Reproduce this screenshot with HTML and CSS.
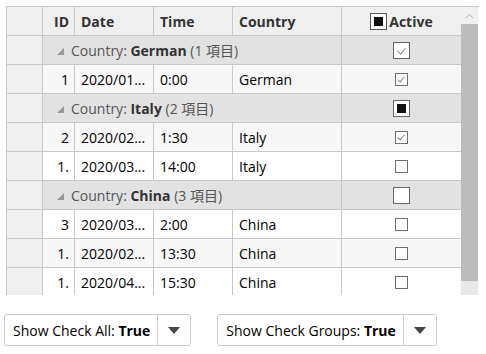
FILE: index.html
```html
<!DOCTYPE html>
<html lang="en">
<head>
    <meta charset="UTF-8">
    <title>Grid Check Groups</title>
    <link rel="stylesheet" href="styles.css">
</head>
<body>
<div class="grid">
    <div class="table">
        <div class="row header">
            <div class="cell rh"></div>
            <div class="cell num">ID</div>
            <div class="cell">Date</div>
            <div class="cell">Time</div>
            <div class="cell">Country</div>
            <div class="cell center"><span class="box head-box"><i></i></span>Active</div>
        </div>

        <div class="row group">
            <div class="cell rh"></div>
            <div class="cell gcell"><span class="arrow"></span><span class="glabel">Country: </span><b>German</b><span class="glabel"> (1 項目)</span></div>
            <div class="cell center"><span class="box gbox checked"></span></div>
        </div>
        <div class="row alt">
            <div class="cell rh"></div>
            <div class="cell num">1</div>
            <div class="cell">2020/01...</div>
            <div class="cell">0:00</div>
            <div class="cell">German</div>
            <div class="cell center"><span class="box checked"></span></div>
        </div>

        <div class="row group">
            <div class="cell rh"></div>
            <div class="cell gcell"><span class="arrow"></span><span class="glabel">Country: </span><b>Italy</b><span class="glabel"> (2 項目)</span></div>
            <div class="cell center"><span class="box gbox"><i></i></span></div>
        </div>
        <div class="row alt">
            <div class="cell rh"></div>
            <div class="cell num">2</div>
            <div class="cell">2020/02...</div>
            <div class="cell">1:30</div>
            <div class="cell">Italy</div>
            <div class="cell center"><span class="box checked"></span></div>
        </div>
        <div class="row">
            <div class="cell rh"></div>
            <div class="cell num">1.</div>
            <div class="cell">2020/03...</div>
            <div class="cell">14:00</div>
            <div class="cell">Italy</div>
            <div class="cell center"><span class="box"></span></div>
        </div>

        <div class="row group">
            <div class="cell rh"></div>
            <div class="cell gcell"><span class="arrow"></span><span class="glabel">Country: </span><b>China</b><span class="glabel"> (3 項目)</span></div>
            <div class="cell center"><span class="box gbox"></span></div>
        </div>
        <div class="row">
            <div class="cell rh"></div>
            <div class="cell num">3</div>
            <div class="cell">2020/03...</div>
            <div class="cell">2:00</div>
            <div class="cell">China</div>
            <div class="cell center"><span class="box"></span></div>
        </div>
        <div class="row alt">
            <div class="cell rh"></div>
            <div class="cell num">1.</div>
            <div class="cell">2020/02...</div>
            <div class="cell">13:30</div>
            <div class="cell">China</div>
            <div class="cell center"><span class="box"></span></div>
        </div>
        <div class="row">
            <div class="cell rh"></div>
            <div class="cell num">1.</div>
            <div class="cell">2020/04...</div>
            <div class="cell">15:30</div>
            <div class="cell">China</div>
            <div class="cell center"><span class="box"></span></div>
        </div>
    </div>
    <div class="scrollbar">
        <div class="sb-up">
            <svg width="9" height="6" viewBox="0 0 9 6"><polyline points="1,5 4.5,1.5 8,5" fill="none" stroke="#b0b0b0" stroke-width="1"/></svg>
        </div>
        <div class="sb-thumb"></div>
        <div class="sb-rest"></div>
    </div>
</div>

<div class="options">
    <div class="combo">
        <div class="combo-text">Show Check All: <b>True</b></div>
        <div class="combo-btn"><span class="caret"></span></div>
    </div>
    <div class="combo">
        <div class="combo-text">Show Check Groups: <b>True</b></div>
        <div class="combo-btn"><span class="caret"></span></div>
    </div>
</div>
</body>
</html>
```

FILE: styles.css
```css
body {
    margin: 0;
    padding: 6px 0 0 6px;
    font-family: "Open Sans", "Noto Sans CJK JP", sans-serif;
    font-size: 14px;
    color: #000;
    background: #fff;
}
.grid {
    display: flex;
    width: 472px;
    height: 288px;
    border-top: 1px solid #c8c8c8;
    border-left: 1px solid #c8c8c8;
    overflow: hidden;
}
.table {
    width: 454px;
}
.row {
    display: grid;
    grid-template-columns: 36px 32px 79px 79px 109px 119px;
    box-sizing: border-box;
    height: 29px;
    border-bottom: 1px solid #c8c8c8;
    background: #fff;
}
.row.alt {
    background: #f7f7f7;
}
.row.header {
    background: #efefef;
    font-weight: bold;
    color: #333;
}
.row.group {
    grid-template-columns: 36px 299px 119px;
    background: #e2e2e2;
}
.cell {
    display: flex;
    align-items: center;
    padding: 0 6px;
    border-right: 1px solid #c8c8c8;
    white-space: nowrap;
    overflow: hidden;
}
.cell:last-child {
    border-right: none;
}
.cell.rh {
    background: #efefef;
    padding: 0;
}
.cell.num {
    justify-content: flex-end;
    padding-right: 5px;
}
.cell.center {
    justify-content: center;
}
.gcell {
    padding-left: 14px;
    color: #333;
}
.glabel {
    color: #555;
    white-space: pre;
}
.arrow {
    width: 0;
    height: 0;
    border-left: 7px solid transparent;
    border-bottom: 7px solid #999;
    margin-right: 7px;
    margin-top: 2px;
}
.box {
    position: relative;
    width: 13px;
    height: 13px;
    box-sizing: border-box;
    border: 1px solid #707070;
    background: #fff;
}
.box.gbox {
    width: 17px;
    height: 17px;
    border-color: #666;
}
.box.head-box {
    width: 17px;
    height: 17px;
    margin-right: 2px;
    border-color: #555;
}
.box i {
    position: absolute;
    left: 3px;
    top: 3px;
    width: 9px;
    height: 9px;
    background: #111;
}
.box.checked::after {
    content: "";
    position: absolute;
    left: 3px;
    top: 1px;
    width: 3px;
    height: 6px;
    border-right: 1px solid #888;
    border-bottom: 1px solid #888;
    transform: rotate(40deg);
}
.box.gbox.checked::after {
    left: 5px;
    top: 3px;
    width: 4px;
    height: 7px;
}
.scrollbar {
    width: 17px;
    display: flex;
    flex-direction: column;
    background: #e8e8e8;
}
.sb-up {
    height: 17px;
    display: flex;
    justify-content: center;
    align-items: center;
    background: #f0f0f0;
}
.sb-thumb {
    height: 257px;
    background: #bcbcbc;
}
.sb-rest {
    flex: 1;
}
.options {
    display: flex;
    gap: 26px;
    margin-top: 19px;
    margin-left: -2px;
}
.combo {
    display: flex;
    height: 32px;
    box-sizing: border-box;
    border: 1px solid #ccc;
    border-radius: 3px;
    font-size: 14px;
}
.combo-text {
    display: flex;
    align-items: center;
    padding: 0 7px 0 8px;
    border-right: 1px solid #ccc;
    white-space: pre;
}
.combo-btn {
    width: 32px;
    display: flex;
    justify-content: center;
    align-items: center;
}
.caret {
    width: 0;
    height: 0;
    border-left: 6px solid transparent;
    border-right: 6px solid transparent;
    border-top: 7px solid #444;
}
```
